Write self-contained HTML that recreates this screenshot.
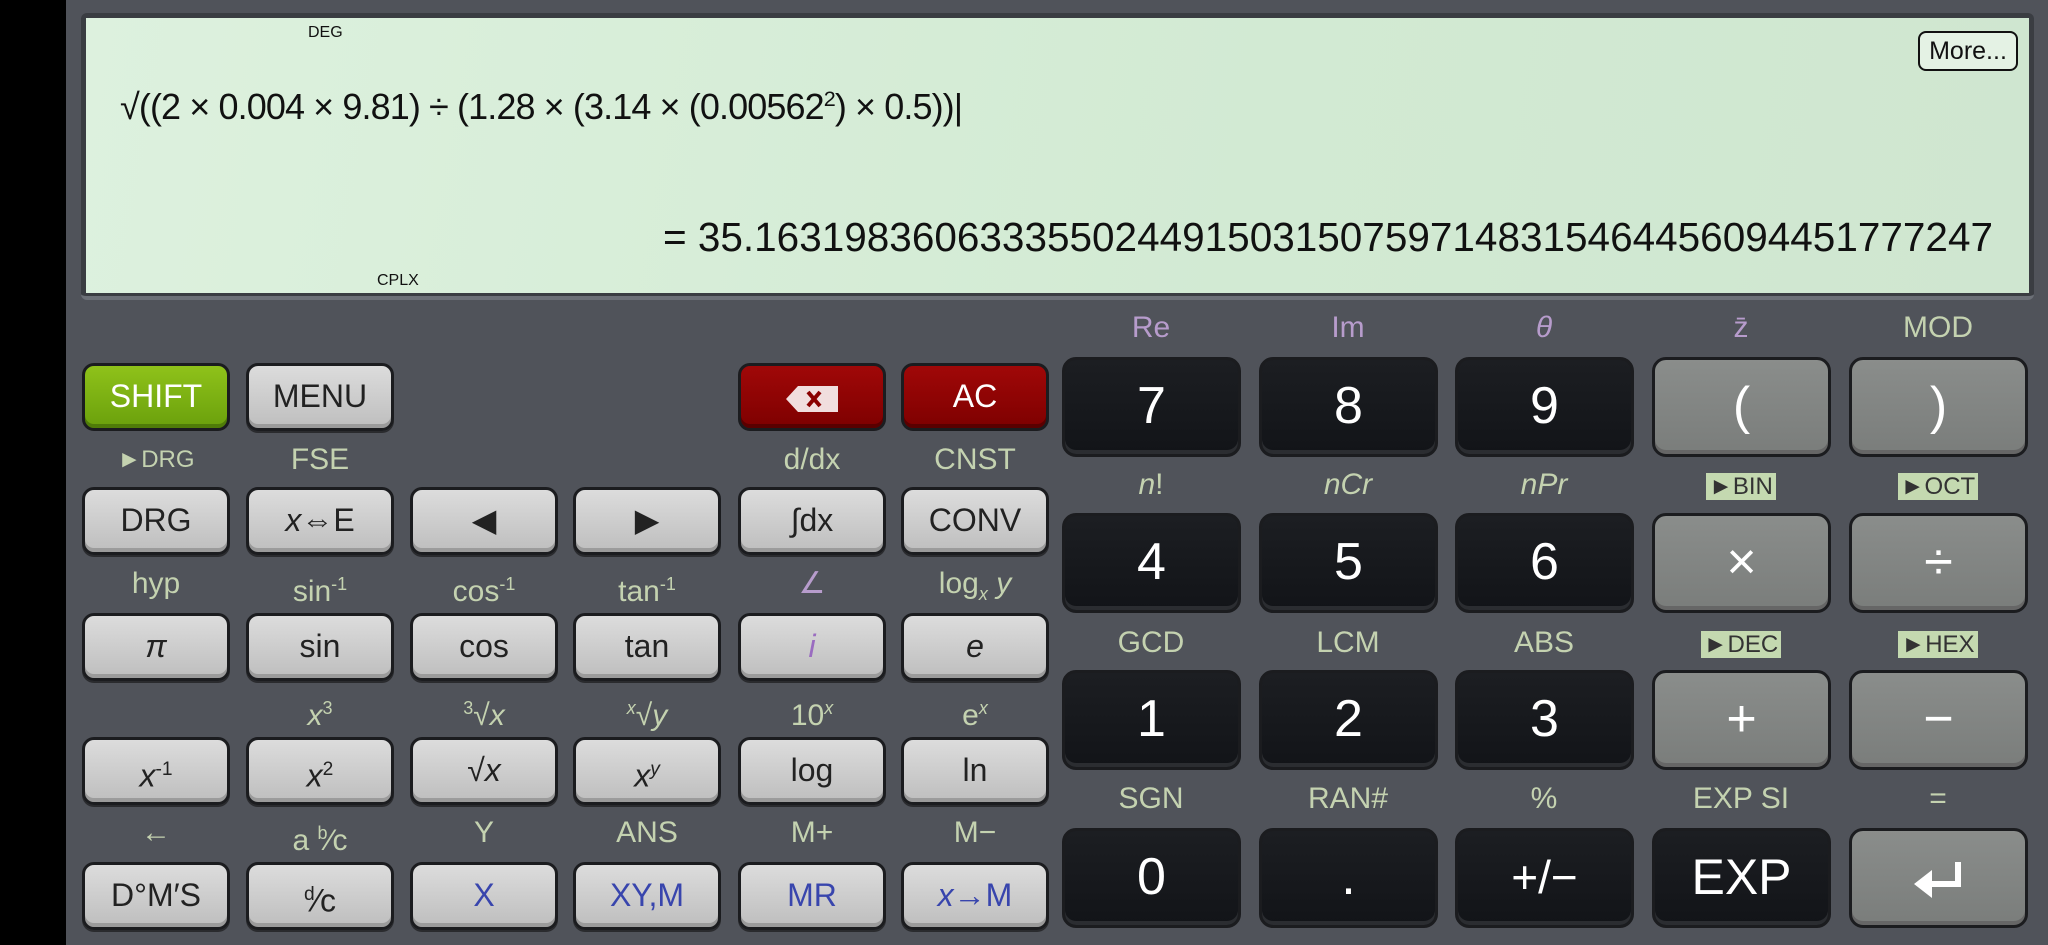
<!DOCTYPE html>
<html><head><meta charset="utf-8"><style>
*{margin:0;padding:0;box-sizing:border-box}
body{width:2048px;height:945px;overflow:hidden;background:#50535a;font-family:"Liberation Sans",sans-serif;position:relative}
#blk{position:absolute;left:0;top:0;width:66px;height:945px;background:#000}
#disp{position:absolute;left:81px;top:13px;width:1953px;height:287px;background:#3a3d42;border-radius:6px;border-bottom:4px solid #6c7077}
#lcd{position:absolute;left:5px;top:5px;right:5px;bottom:3px;background:linear-gradient(100deg,#ddf1de,#d2ead3 60%,#cfe6d0)}
.sm{position:absolute;font-size:16px;color:#111}
#expr{position:absolute;left:34px;top:68px;font-size:36px;color:#111;white-space:nowrap;letter-spacing:-0.9px}
#res{position:absolute;right:36px;top:196px;font-size:40.5px;color:#111;white-space:nowrap}
#more{position:absolute;left:1832px;top:13px;width:100px;height:40px;border:2px solid #111;border-radius:8px;font-size:25px;text-align:center;line-height:36px;color:#111;background:#e4f2e4}
.k{position:absolute;width:148px;height:68px;border:3px solid #1b1c1f;border-radius:12px;background:linear-gradient(#dcdcdc,#bebebe);box-shadow:inset 0 -4px 0 #9b9b9b,0 2px 0 #2a2b2e;text-align:center;line-height:60px;font-size:32px;color:#222;white-space:nowrap}
.r{position:absolute;width:179px;height:100px;border:3px solid #1b1c1f;border-radius:14px;text-align:center;line-height:92px;font-size:52px;color:#fff;background:linear-gradient(#1c1e22,#121418);box-shadow:inset 0 -4px 0 #2b2d31}
.g{background:linear-gradient(#8a8d8b,#7a7d7b);box-shadow:inset 0 -4px 0 #666}
.l{position:absolute;width:170px;margin-left:-85px;text-align:center;font-size:30px;color:#c4d2b0;white-space:nowrap;line-height:34px}
.p{color:#b79ccc}
.b{color:#3845ad}
.tag{background:#c4d9b0;color:#333;font-size:24px;padding:0 3px}
sup{font-size:.6em}
</style></head><body>
<div id="blk"></div>
<div id="disp"><div id="lcd">
<div class="sm" style="left:222px;top:6px">DEG</div>
<div class="sm" style="left:291px;top:254px">CPLX</div>
<div id="expr">√((2 × 0.004 × 9.81) ÷ (1.28 × (3.14 × (0.00562<sup>2</sup>) × 0.5))|</div>
<div id="res">= 35.1631983606333550244915031507597148315464456094451777247</div>
<div id="more">More...</div>
</div></div>

<div class="k" style="left:82px;top:363px;background:linear-gradient(#8fc21a,#6aa00c);color:#fff;box-shadow:inset 0 -4px 0 #4f7c08">SHIFT</div>
<div class="k" style="left:246px;top:363px">MENU</div>
<div class="k" style="left:738px;top:363px;background:linear-gradient(#a00808,#7e0000);box-shadow:inset 0 -4px 0 #5a0000;color:#fff">
<svg width="52" height="28" viewBox="0 0 52 28" style="vertical-align:middle"><path d="M0 14L12 1H52V27H12Z" fill="#f1dede"/><path d="M22 7L34 21M34 7L22 21" stroke="#8a0000" stroke-width="4"/></svg></div>
<div class="k" style="left:901px;top:363px;background:linear-gradient(#a00808,#7e0000);box-shadow:inset 0 -4px 0 #5a0000;color:#fff">AC</div>

<div class="l" style="left:156px;top:443px;font-size:24px">►DRG</div>
<div class="l" style="left:320px;top:443px">FSE</div>
<div class="l" style="left:812px;top:443px">d/dx</div>
<div class="l" style="left:975px;top:443px">CNST</div>

<div class="k" style="left:82px;top:487px">DRG</div>
<div class="k" style="left:246px;top:487px"><i>x</i>⇔E</div>
<div class="k" style="left:410px;top:487px">◀</div>
<div class="k" style="left:573px;top:487px">▶</div>
<div class="k" style="left:738px;top:487px">∫dx</div>
<div class="k" style="left:901px;top:487px">CONV</div>

<div class="l" style="left:156px;top:567px">hyp</div>
<div class="l" style="left:320px;top:567px">sin<sup>-1</sup></div>
<div class="l" style="left:484px;top:567px">cos<sup>-1</sup></div>
<div class="l" style="left:647px;top:567px">tan<sup>-1</sup></div>
<div class="l p" style="left:812px;top:567px">∠</div>
<div class="l" style="left:975px;top:567px">log<sub style="font-size:.6em"><i>x</i></sub> <i>y</i></div>

<div class="k" style="left:82px;top:613px"><i>π</i></div>
<div class="k" style="left:246px;top:613px">sin</div>
<div class="k" style="left:410px;top:613px">cos</div>
<div class="k" style="left:573px;top:613px">tan</div>
<div class="k" style="left:738px;top:613px;color:#9a6cc0"><i>i</i></div>
<div class="k" style="left:901px;top:613px"><i>e</i></div>

<div class="l" style="left:320px;top:691px"><i>x</i><sup>3</sup></div>
<div class="l" style="left:484px;top:691px"><sup>3</sup>√<i>x</i></div>
<div class="l" style="left:647px;top:691px"><sup><i>x</i></sup>√<i>y</i></div>
<div class="l" style="left:812px;top:691px">10<sup><i>x</i></sup></div>
<div class="l" style="left:975px;top:691px">e<sup><i>x</i></sup></div>

<div class="k" style="left:82px;top:737px"><i>x</i><sup>-1</sup></div>
<div class="k" style="left:246px;top:737px"><i>x</i><sup>2</sup></div>
<div class="k" style="left:410px;top:737px">√<i>x</i></div>
<div class="k" style="left:573px;top:737px"><i>x</i><sup><i>y</i></sup></div>
<div class="k" style="left:738px;top:737px">log</div>
<div class="k" style="left:901px;top:737px">ln</div>

<div class="l" style="left:156px;top:816px">←</div>
<div class="l" style="left:320px;top:816px">a <sup>b</sup>⁄c</div>
<div class="l" style="left:484px;top:816px">Y</div>
<div class="l" style="left:647px;top:816px">ANS</div>
<div class="l" style="left:812px;top:816px">M+</div>
<div class="l" style="left:975px;top:816px">M−</div>

<div class="k" style="left:82px;top:862px">D°M′S</div>
<div class="k" style="left:246px;top:862px"><sup>d</sup>⁄c</div>
<div class="k b" style="left:410px;top:862px">X</div>
<div class="k b" style="left:573px;top:862px">XY,M</div>
<div class="k b" style="left:738px;top:862px">MR</div>
<div class="k b" style="left:901px;top:862px"><i>x</i>→M</div>

<div class="l p" style="left:1151px;top:311px">Re</div>
<div class="l p" style="left:1348px;top:311px">Im</div>
<div class="l p" style="left:1544px;top:311px"><i>θ</i></div>
<div class="l p" style="left:1741px;top:311px">z̄</div>
<div class="l" style="left:1938px;top:311px">MOD</div>
<div class="r" style="left:1062px;top:357px">7</div>
<div class="r" style="left:1259px;top:357px">8</div>
<div class="r" style="left:1455px;top:357px">9</div>
<div class="r g" style="left:1652px;top:357px">(</div>
<div class="r g" style="left:1849px;top:357px">)</div>

<div class="l" style="left:1151px;top:468px"><i>n</i>!</div>
<div class="l" style="left:1348px;top:468px"><i>nCr</i></div>
<div class="l" style="left:1544px;top:468px"><i>nPr</i></div>
<div class="l" style="left:1741px;top:468px"><span class="tag">►BIN</span></div>
<div class="l" style="left:1938px;top:468px"><span class="tag">►OCT</span></div>
<div class="r" style="left:1062px;top:513px">4</div>
<div class="r" style="left:1259px;top:513px">5</div>
<div class="r" style="left:1455px;top:513px">6</div>
<div class="r g" style="left:1652px;top:513px">×</div>
<div class="r g" style="left:1849px;top:513px">÷</div>

<div class="l" style="left:1151px;top:626px">GCD</div>
<div class="l" style="left:1348px;top:626px">LCM</div>
<div class="l" style="left:1544px;top:626px">ABS</div>
<div class="l" style="left:1741px;top:626px"><span class="tag">►DEC</span></div>
<div class="l" style="left:1938px;top:626px"><span class="tag">►HEX</span></div>
<div class="r" style="left:1062px;top:670px">1</div>
<div class="r" style="left:1259px;top:670px">2</div>
<div class="r" style="left:1455px;top:670px">3</div>
<div class="r g" style="left:1652px;top:670px">+</div>
<div class="r g" style="left:1849px;top:670px">−</div>

<div class="l" style="left:1151px;top:782px">SGN</div>
<div class="l" style="left:1348px;top:782px">RAN#</div>
<div class="l" style="left:1544px;top:782px">%</div>
<div class="l" style="left:1741px;top:782px">EXP SI</div>
<div class="l" style="left:1938px;top:782px">=</div>
<div class="r" style="left:1062px;top:828px">0</div>
<div class="r" style="left:1259px;top:828px">.</div>
<div class="r" style="left:1455px;top:828px;font-size:46px">+/−</div>
<div class="r" style="left:1652px;top:828px;font-size:50px">EXP</div>
<div class="r g" style="left:1849px;top:828px"><svg width="50" height="40" viewBox="0 0 50 40" style="vertical-align:middle"><path d="M44 2V24H16" stroke="#fff" stroke-width="6" fill="none"/><path d="M0 24L18 10V38Z" fill="#fff"/></svg></div>
</body></html>
